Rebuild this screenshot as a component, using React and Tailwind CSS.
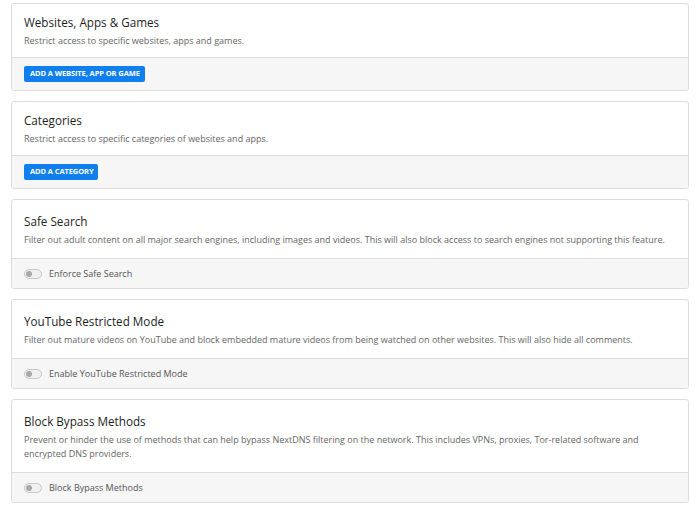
const cards = [
  {
    title: "Websites, Apps & Games",
    desc: "Restrict access to specific websites, apps and games.",
    button: "ADD A WEBSITE, APP OR GAME",
  },
  {
    title: "Categories",
    desc: "Restrict access to specific categories of websites and apps.",
    button: "ADD A CATEGORY",
  },
  {
    title: "Safe Search",
    desc: "Filter out adult content on all major search engines, including images and videos. This will also block access to search engines not supporting this feature.",
    toggle: "Enforce Safe Search",
  },
  {
    title: "YouTube Restricted Mode",
    desc: "Filter out mature videos on YouTube and block embedded mature videos from being watched on other websites. This will also hide all comments.",
    toggle: "Enable YouTube Restricted Mode",
  },
  {
    title: "Block Bypass Methods",
    desc: "Prevent or hinder the use of methods that can help bypass NextDNS filtering on the network. This includes VPNs, proxies, Tor-related software and encrypted DNS providers.",
    toggle: "Block Bypass Methods",
  },
];

function Toggle({ label }) {
  return (
    <div className="flex h-[29px] items-center px-3">
      <span className="flex h-[10px] w-[18px] items-center rounded-full border border-[#c9c9c9] bg-[#f0f0f0] px-[1px]">
        <span className="h-[6px] w-[6px] rounded-full bg-[#a9a9a9]" />
      </span>
      <span className="ml-[7px] text-[9px] leading-[12px] text-[#555]">{label}</span>
    </div>
  );
}

function Card({ card }) {
  const isToggle = !!card.toggle;
  return (
    <div className="overflow-hidden rounded-[3px] border border-[#dcdcdc] bg-white">
      <div className={isToggle ? "px-3 pt-[13px] pb-[11px]" : "px-3 pt-[10px] pb-[9px]"}>
        <h3 className="text-[11.7px] leading-[16px] text-[#1e1e1e]">{card.title}</h3>
        <p className="mt-[4px] text-[9px] leading-[14px] text-[#666]">{card.desc}</p>
      </div>
      <div className="border-t border-[#dcdcdc] bg-[#f6f6f6]">
        {isToggle ? (
          <Toggle label={card.toggle} />
        ) : (
          <div className="px-3 py-[8px]">
            <button className="flex h-[16px] items-center rounded-[2px] bg-[#0f7ff0] pl-[6px] pr-[5px] text-[7.5px] font-bold tracking-[-0.1px] text-white">
              {card.button}
            </button>
          </div>
        )}
      </div>
    </div>
  );
}

export default function App() {
  return (
    <main className="min-h-screen bg-white px-[11px] pt-[3px] font-['Open_Sans',sans-serif]">
      <div className="flex flex-col gap-[10px]">
        {cards.map((c) => (
          <Card key={c.title} card={c} />
        ))}
      </div>
    </main>
  );
}
